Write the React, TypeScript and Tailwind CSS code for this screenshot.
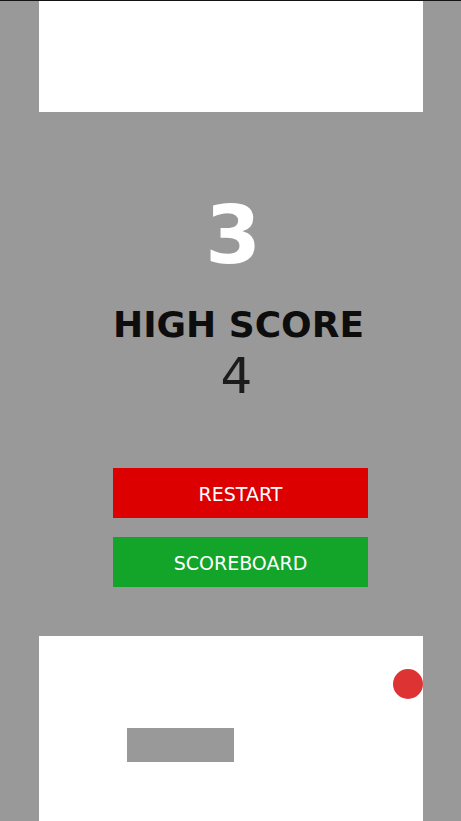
import React from 'react';

interface Props {
  score: number;
  highScore: number;
  onRestart?: () => void;
  onScoreboard?: () => void;
}

const GameOver: React.FC<Props> = ({ score, highScore, onRestart, onScoreboard }) => {
  return (
    <section className="pt-[84px] pb-[49px]">
      <p className="pl-1 text-center text-[80px] leading-[80px] font-bold text-white">{score}</p>

      <div className="pl-[74px] pr-[55px]">
        <div className="mt-[29px] w-fit text-center">
          <h1 className="whitespace-nowrap text-[36px] leading-[40px] font-bold text-[#0d0d0d]">HIGH SCORE</h1>
          <p className="mt-[7px] pr-1 text-[50px] leading-[48px] text-[#1c1c1c]">{highScore}</p>
        </div>

        <div className="mt-[68px] flex flex-col gap-[19px] text-[19px] text-white">
          <button type="button" onClick={onRestart} className="h-[50px] bg-[#dd0000] pt-0.5">
            RESTART
          </button>
          <button type="button" onClick={onScoreboard} className="h-[50px] bg-[#12a52a] pt-0.5">
            SCOREBOARD
          </button>
        </div>
      </div>
    </section>
  );
};

const App: React.FC = () => {
  return (
    <main className="flex min-h-screen flex-col border-t border-[#151215] bg-[#999999] pl-[39px] pr-[38px] font-['DejaVu_Sans',sans-serif]">
      <div className="h-[111px] bg-white" />

      <GameOver score={3} highScore={4} />

      {/* playfield with the ball and an obstacle */}
      <div className="flex flex-1 flex-col bg-white pt-[33px]">
        <div className="size-[30px] self-end rounded-full bg-[#dd3333]" />
        <div className="mt-[29px] ml-[88px] h-[34px] w-[107px] bg-[#999999]" />
      </div>
    </main>
  );
};

export default App;
